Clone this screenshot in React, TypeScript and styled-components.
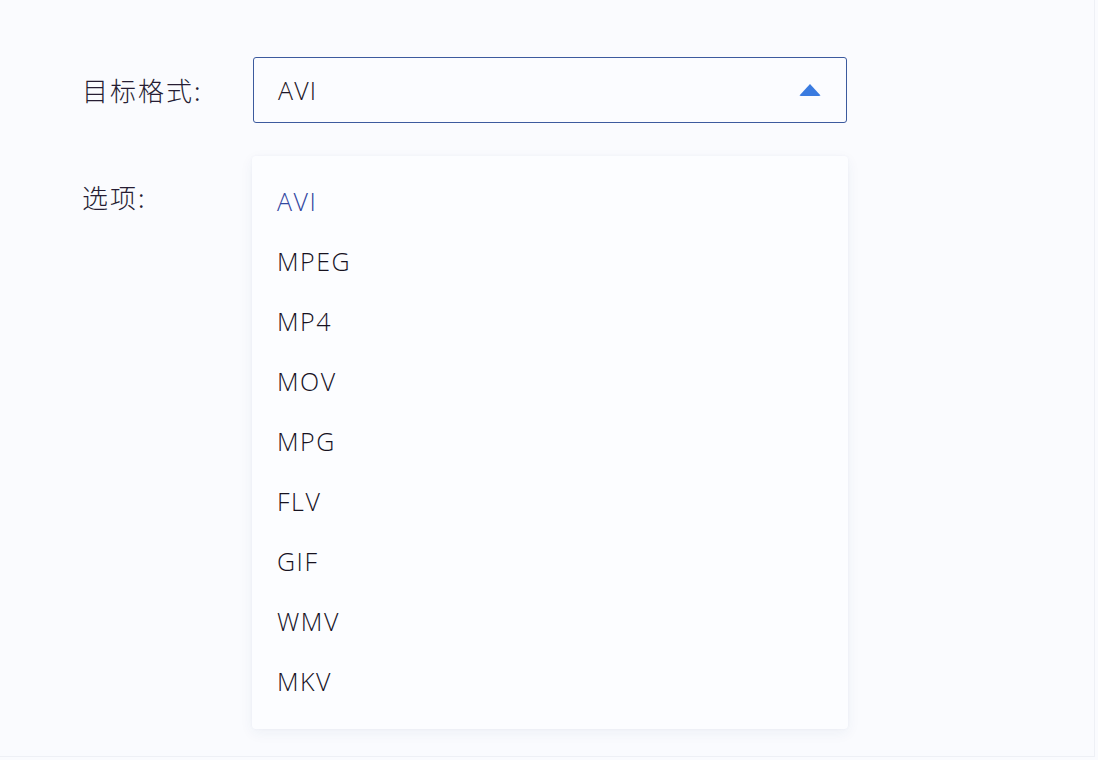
import React from "react";
import styled, { createGlobalStyle } from "styled-components";

const GlobalStyle = createGlobalStyle`
  body {
    margin: 0;
    background: #fafbfe;
    font-family: "Open Sans", "Noto Sans", "Noto Sans CJK SC", sans-serif;
  }
`;

const Page = styled.div`
  width: 1095px;
  height: 757px;
  box-sizing: border-box;
  padding: 57px 0 0 82px;
  border-right: 1px solid #eef0f5;
  border-bottom: 1px solid #eef0f5;
  display: grid;
  grid-template-columns: 171px 594px;
  grid-template-rows: 66px auto;
  align-content: start;
  row-gap: 33px;
`;

const Label = styled.div<{ offset?: number }>`
  font-family: "Noto Sans CJK SC", sans-serif;
  font-size: 26px;
  font-weight: 300;
  color: #261d33;
  letter-spacing: 2px;
  line-height: 32px;
  align-self: ${(p) => (p.offset ? "start" : "center")};
  padding-top: ${(p) => p.offset || 0}px;
`;

const SelectBox = styled.div`
  box-sizing: border-box;
  height: 66px;
  border: 1px solid #3c5a9e;
  border-radius: 3px;
  background: #fbfcff;
  display: flex;
  align-items: center;
  justify-content: space-between;
  padding: 0 25px 0 24px;
  font-size: 25px;
  font-weight: 300;
  letter-spacing: 1.2px;
  color: #1d1729;
`;

const Caret = styled.span`
  width: 0;
  height: 0;
  border-left: 11px solid transparent;
  border-right: 11px solid transparent;
  border-bottom: 12px solid #3a7be0;
  border-radius: 2px;
  margin-top: -1px;
`;

const Menu = styled.ul`
  list-style: none;
  align-self: start;
  margin: 0 -1px;
  padding: 15px 0 18px;
  background: #fcfdff;
  border-radius: 4px;
  box-shadow: 0 4px 14px rgba(40, 60, 120, 0.06), 0 0 3px rgba(40, 60, 120, 0.04);
  width: 596px;
`;

const Item = styled.li<{ active?: boolean }>`
  height: 60px;
  display: flex;
  align-items: center;
  padding-left: 25px;
  font-size: 25px;
  font-weight: 300;
  letter-spacing: 1.5px;
  color: ${(p) => (p.active ? "#33479f" : "#17121f")};
`;

const formats = ["AVI", "MPEG", "MP4", "MOV", "MPG", "FLV", "GIF", "WMV", "MKV"];

export default function App() {
  return (
    <>
      <GlobalStyle />
      <Page>
        <Label>目标格式:</Label>
        <SelectBox>
          <span>AVI</span>
          <Caret />
        </SelectBox>
        <Label offset={25}>选项:</Label>
        <Menu>
          {formats.map((f, i) => (
            <Item key={f} active={i === 0}>
              {f}
            </Item>
          ))}
        </Menu>
      </Page>
    </>
  );
}
